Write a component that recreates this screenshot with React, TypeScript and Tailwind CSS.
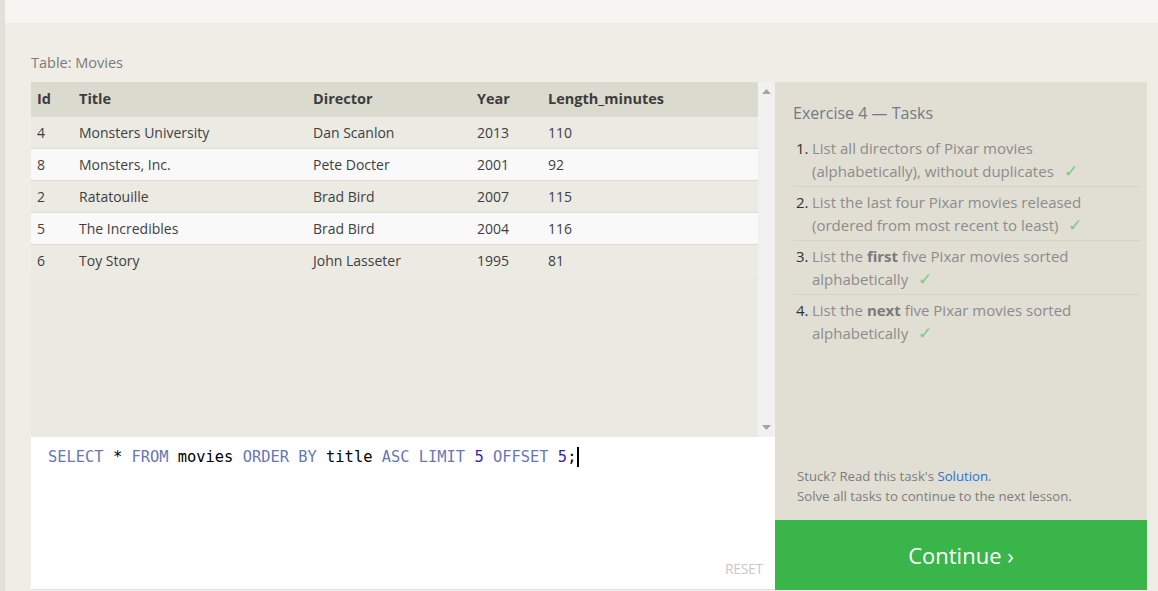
import React from 'react';

const movies = [
  { id: 4, title: 'Monsters University', director: 'Dan Scanlon', year: 2013, length: 110 },
  { id: 8, title: 'Monsters, Inc.', director: 'Pete Docter', year: 2001, length: 92 },
  { id: 2, title: 'Ratatouille', director: 'Brad Bird', year: 2007, length: 115 },
  { id: 5, title: 'The Incredibles', director: 'Brad Bird', year: 2004, length: 116 },
  { id: 6, title: 'Toy Story', director: 'John Lasseter', year: 1995, length: 81 },
];

function Check() {
  return <span className="ml-[10px] text-[17px] leading-[20px] text-[#7cc987]">✓</span>;
}

function Kw({ children }: { children: React.ReactNode }) {
  return <span className="text-[#6877b5]">{children}</span>;
}

function Num({ children }: { children: React.ReactNode }) {
  return <span className="text-[#3a22a8]">{children}</span>;
}

export default function App() {
  return (
    <div
      className="flex h-[591px] w-[1158px] overflow-hidden bg-[#efede6]"
      style={{ fontFamily: '"Open Sans", "Noto Sans", sans-serif' }}
    >
      {/* Left edge */}
      <div className="w-[5px] shrink-0 bg-[#e3dfdb]" />

      <div className="flex flex-1 flex-col">
        {/* Lesson text, scrolled past */}
        <div className="h-[23px] shrink-0 overflow-hidden bg-[#f6f5f1] pl-[26px]">
          <p className="-mt-[21px] text-[16px] leading-[22px] text-[#222]">
            Using these clauses let you sort results by any column and page through results quickly as you query
          </p>
        </div>

        <div className="flex-1 px-[26px] pt-[30px]">
          <div className="mb-[9px] h-[20px] text-[14.5px] leading-[20px] text-[#7b7b7b]">Table: Movies</div>

          <div className="flex">
            {/* Left: results + editor */}
            <div className="flex w-[744px] flex-col">
              <div className="flex h-[355px] bg-[#eae9e2]">
                <div className="flex-1">
                  <table className="w-full table-fixed border-collapse text-left text-[14px] text-[#3f3f3f]">
                    <colgroup>
                      <col className="w-[42px]" />
                      <col className="w-[234px]" />
                      <col className="w-[164px]" />
                      <col className="w-[71px]" />
                      <col />
                    </colgroup>
                    <thead>
                      <tr className="h-[34px] bg-[#dbdacf] text-[14.5px] font-bold text-[#3d3d3d]">
                        <th className="pl-[6px] pt-[1px]">Id</th>
                        <th className="pl-[6px] pt-[1px]">Title</th>
                        <th className="pl-[6px] pt-[1px]">Director</th>
                        <th className="pl-[6px] pt-[1px]">Year</th>
                        <th className="pl-[6px] pt-[1px]">Length_minutes</th>
                      </tr>
                    </thead>
                    <tbody>
                      {movies.map((m, i) => (
                        <tr
                          key={m.id}
                          className={`h-[32px] border-t border-[#dcdbd4] ${i % 2 === 1 ? 'bg-[#f9f9f9]' : 'bg-[#ebeae3]'}`}
                        >
                          <td className="pl-[6px] pt-[1px]">{m.id}</td>
                          <td className="pl-[6px] pt-[1px]">{m.title}</td>
                          <td className="pl-[6px] pt-[1px]">{m.director}</td>
                          <td className="pl-[6px] pt-[1px]">{m.year}</td>
                          <td className="pl-[6px] pt-[1px]">{m.length}</td>
                        </tr>
                      ))}
                    </tbody>
                  </table>
                </div>
                {/* Scrollbar */}
                <div className="flex w-[17px] flex-col items-center justify-between bg-[#f1f1f1] py-[7px]">
                  <svg width="9" height="5" viewBox="0 0 9 5">
                    <path d="M0 5 L4.5 0 L9 5 Z" fill="#a3a3a3" />
                  </svg>
                  <svg width="9" height="5" viewBox="0 0 9 5">
                    <path d="M0 0 L4.5 5 L9 0 Z" fill="#a3a3a3" />
                  </svg>
                </div>
              </div>

              {/* Editor */}
              <div className="relative h-[153px] border-b border-[#e4e2da] bg-white px-[17px] pt-[9px]">
                <div
                  className="flex items-center text-[15.4px] leading-[22px] text-black"
                  style={{ fontFamily: '"DejaVu Sans Mono", monospace' }}
                >
                  <span className="whitespace-pre">
                    <Kw>SELECT</Kw> * <Kw>FROM</Kw> movies <Kw>ORDER</Kw> <Kw>BY</Kw> title <Kw>ASC</Kw> <Kw>LIMIT</Kw> <Num>5</Num> <Kw>OFFSET</Kw> <Num>5</Num>;
                  </span>
                  <span className="ml-[1px] inline-block h-[20px] w-[2px] bg-black" />
                </div>
                <span className="absolute bottom-[10px] right-[12px] text-[14px] tracking-[-0.3px] text-[#c9c9c9]">RESET</span>
              </div>
            </div>

            {/* Right: tasks + continue */}
            <div className="flex w-[372px] flex-col">
              <div className="flex h-[438px] flex-col justify-between bg-[#e1dfd4] pb-[14px] pl-[18px] pr-[7px] pt-[20px]">
                <div>
                  <h2 className="text-[16px] leading-[22px] text-[#737a84]">Exercise 4 — Tasks</h2>
                  <ol className="mt-[13px] text-[15px] leading-[23px] text-[#8c8c8c]">
                    <li className="flex border-b border-[#d6d4c9] pb-[3px]">
                      <span className="w-[19px] shrink-0 pl-[3px] text-[#333]">1.</span>
                      <span>
                        List all directors of Pixar movies (alphabetically), without duplicates
                        <Check />
                      </span>
                    </li>
                    <li className="flex border-b border-[#d6d4c9] pb-[3px] pt-[4px]">
                      <span className="w-[19px] shrink-0 pl-[3px] text-[#333]">2.</span>
                      <span>
                        List the last four Pixar movies released (ordered from most recent to least)
                        <Check />
                      </span>
                    </li>
                    <li className="flex border-b border-[#d6d4c9] pb-[3px] pt-[4px]">
                      <span className="w-[19px] shrink-0 pl-[3px] text-[#333]">3.</span>
                      <span>
                        List the <b className="text-[#7a7a7a]">first</b> five Pixar movies sorted alphabetically
                        <Check />
                      </span>
                    </li>
                    <li className="flex pt-[4px]">
                      <span className="w-[19px] shrink-0 pl-[3px] text-[#333]">4.</span>
                      <span>
                        List the <b className="text-[#7a7a7a]">next</b> five Pixar movies sorted alphabetically
                        <Check />
                      </span>
                    </li>
                  </ol>
                </div>
                <div className="pl-[4px] text-[13.2px] leading-[20px] text-[#7d7d7d]">
                  <p>
                    Stuck? Read this task's <a className="text-[#2b6fd6]">Solution</a>.
                  </p>
                  <p>Solve all tasks to continue to the next lesson.</p>
                </div>
              </div>
              <div className="flex h-[70px] items-center justify-center bg-[#39b54a] text-[22px] text-white">
                Continue ›
              </div>
            </div>
          </div>
        </div>
      </div>
    </div>
  );
}
